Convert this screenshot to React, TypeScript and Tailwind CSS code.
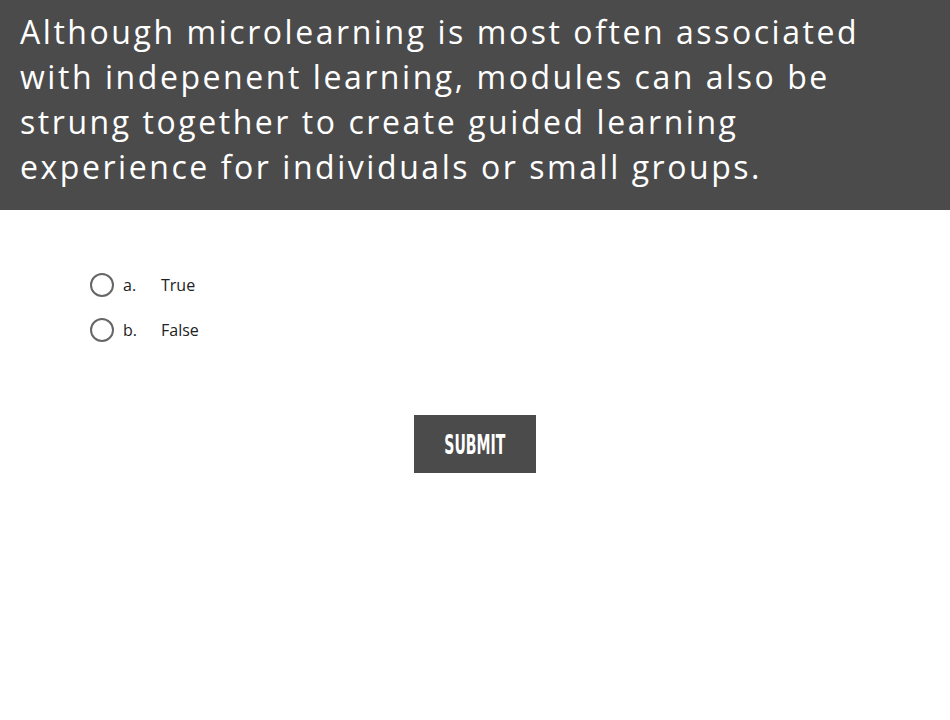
export default function App() {
  const options = [
    { key: 'a.', label: 'True' },
    { key: 'b.', label: 'False' },
  ]

  return (
    <div className="w-[950px] h-[720px] bg-white" style={{ fontFamily: '"Open Sans", sans-serif' }}>
      <header className="bg-[#4b4b4b] h-[210px] px-[20px] pt-[9px]">
        <h1 className="w-[860px] text-white text-[32px] leading-[45px] tracking-[2.55px] font-normal">
          Although microlearning is most often associated with indepenent learning, modules can also be strung
          together to create guided learning experience for individuals or small groups.
        </h1>
      </header>

      <div className="pl-[90px] pt-[63px] flex flex-col gap-[21px]">
        {options.map((o) => (
          <label key={o.key} className="flex items-center h-[24px] cursor-pointer">
            <span className="w-[24px] h-[24px] rounded-full border-2 border-[#666666] bg-white" />
            <span className="ml-[9px] w-[38px] text-[16px] text-[#222222]">{o.key}</span>
            <span className="text-[16px] text-[#222222]">{o.label}</span>
          </label>
        ))}
      </div>

      <div className="flex justify-center pt-[73px]">
        <button className="w-[122px] h-[58px] bg-[#4b4b4b] text-white flex items-center justify-center">
          <span
            className="inline-block text-[26px] font-bold leading-none uppercase scale-x-[0.6] translate-y-[1px]"
            style={{ fontFamily: '"DejaVu Sans Condensed", "DejaVu Sans", sans-serif' }}
          >
            Submit
          </span>
        </button>
      </div>
    </div>
  )
}
